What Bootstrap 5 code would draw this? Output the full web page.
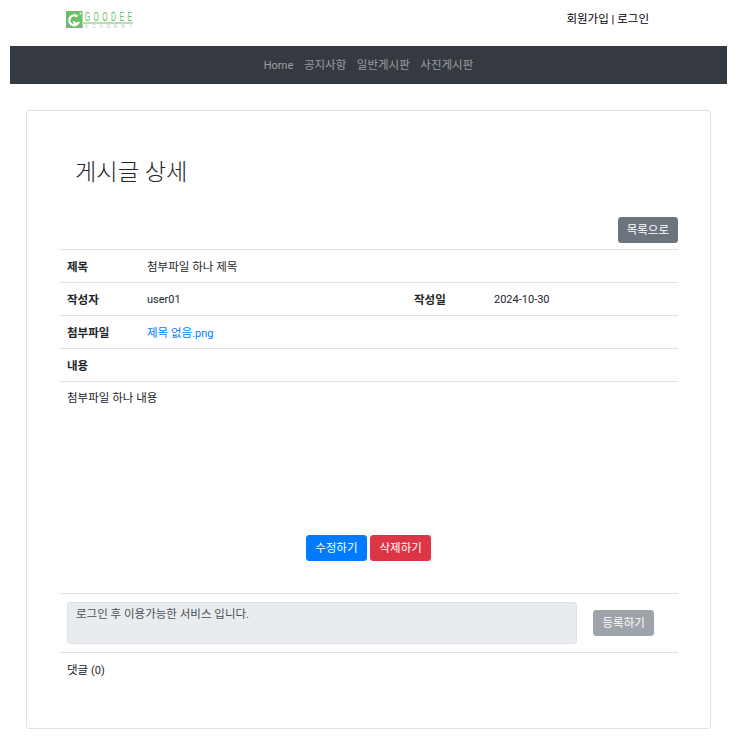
<!DOCTYPE html>
<html lang="ko">
<head>
    <meta charset="UTF-8">
    <title>게시글 상세</title>
    <link rel="stylesheet" href="https://cdn.jsdelivr.net/npm/bootstrap@5.3.0/dist/css/bootstrap.min.css">
    <style>
        body { font-family: Roboto, "Noto Sans CJK KR", sans-serif; font-size: 11.5px; line-height: 16px; color: #212529; }
        .lat { font-size: 11px; line-height: 1; }
        .page-wrap { padding: 0 15px 0 10px; }
        .top-head { height: 46px; padding: 11px 78px 0 56px; }
        .logo-main { font-family: "Liberation Sans", sans-serif; }
        .user-links { color: #000; }
        .user-links a { color: #000; text-decoration: none; }
        .main-nav { height: 38px; background: #343a40; }
        .main-nav a { color: rgba(255, 255, 255, .5); text-decoration: none; padding: 0 5.3px; }
        .detail-card { margin: 26px 16px 0; height: 619px; padding: 0 32px; border-color: #dee2e6; border-radius: 3px; }
        .detail-title { font-size: 23.2px; line-height: 32px; font-weight: 300; margin: 45px 0 29px 16px; }
        .btn-line { height: 32px; }
        .btn-small { font-size: 11.5px; line-height: 16px; padding: 4px 8px; border-radius: 3px; border-width: 1px; }
        .action-line .btn-small, .reply-form .btn-small { padding: 4px 8.5px; }
        .btn-secondary { --bs-btn-bg: #6c757d; --bs-btn-disabled-bg: #6c757d; --bs-btn-disabled-border-color: #6c757d; --bs-btn-disabled-opacity: .65; }
        .btn-primary { --bs-btn-bg: #007bff; --bs-btn-border-color: #007bff; }
        .btn-danger { --bs-btn-bg: #dc3545; --bs-btn-border-color: #dc3545; }
        .detail-table { table-layout: fixed; margin: 0; font-size: 11.5px; --bs-table-border-color: #dee2e6; border-top: 1px solid #dee2e6; }
        .detail-table td, .detail-table th { padding: 8.5px 8px 7.5px; line-height: 16px; font-weight: 400; }
        .detail-table th { font-weight: 700; }
        .detail-table a { color: #007bff; text-decoration: none; }
        .detail-table .content-cell { height: 153px; padding-top: 7.5px; vertical-align: top; border-bottom: 0; }
        .action-line { height: 58px; gap: 3px; }
        .reply-form { border-top: 1px solid #dee2e6; border-bottom: 1px solid #dee2e6; padding: 8px; gap: 16px; height: 60px; }
        .reply-box { width: 510px; height: 42px; font-size: 11.5px; line-height: 16px; padding: 3px 8px; border-radius: 3px; background: #e9ecef; resize: none; color: #495057; }
        .reply-box::placeholder { color: #495057; opacity: 1; }
        .reply-count { padding: 9px 8px; color: #212529; }
    </style>
</head>
<body>
<div class="page-wrap">
    <div class="top-head d-flex justify-content-between align-items-start">
        <svg width="67" height="18" viewBox="0 0 67 18">
            <rect x="0" y="0" width="16.5" height="17" fill="#6cc06a"/>
            <path d="M0 13 L3 17 L0 17 Z M16.5 14 L16.5 17 L11 17 Z" fill="#999"/>
            <path d="M11.5 5.5 A5 5 0 1 0 13 11 A3 3 0 0 1 7.5 10.5" fill="none" stroke="#fff" stroke-width="2.2"/>
            <circle cx="14.5" cy="2.5" r="1" fill="#fff"/>
            <g transform="scale(.55 1)">
                <text class="logo-main" x="34" y="10" font-size="12.5" fill="#6cc06a" textLength="86" lengthAdjust="spacing">GOODEE</text>
            </g>
            <rect x="17" y="11.5" width="50" height="1" fill="#6cc06a"/>
            <text class="logo-main" x="19" y="17" font-size="4.5" fill="#c4c4c4" textLength="47" lengthAdjust="spacing">ACADEMY</text>
        </svg>
        <div class="user-links"><a href="#">회원가입</a> | <a href="#">로그인</a></div>
    </div>

    <nav class="main-nav d-flex justify-content-center align-items-center">
        <a href="#" class="lat">Home</a>
        <a href="#">공지사항</a>
        <a href="#">일반게시판</a>
        <a href="#">사진게시판</a>
    </nav>

    <div class="card detail-card">
        <h2 class="detail-title">게시글 상세</h2>
        <div class="btn-line d-flex justify-content-end align-items-start">
            <a href="#" class="btn btn-secondary btn-small">목록으로</a>
        </div>
        <table class="table detail-table">
            <colgroup>
                <col style="width:80px">
                <col style="width:267px">
                <col style="width:80px">
                <col>
            </colgroup>
            <tr><th>제목</th><td colspan="3">첨부파일 하나 제목</td></tr>
            <tr><th>작성자</th><td class="lat">user01</td><th>작성일</th><td class="lat">2024-10-30</td></tr>
            <tr><th>첨부파일</th><td colspan="3"><a href="#">제목 없음<span class="lat">.png</span></a></td></tr>
            <tr><th colspan="4">내용</th></tr>
            <tr><td colspan="4" class="content-cell">첨부파일 하나 내용</td></tr>
        </table>
        <div class="action-line d-flex justify-content-center align-items-start">
            <a href="#" class="btn btn-primary btn-small">수정하기</a>
            <a href="#" class="btn btn-danger btn-small">삭제하기</a>
        </div>
        <div class="reply-form d-flex align-items-center">
            <textarea class="form-control reply-box" placeholder="로그인 후 이용가능한 서비스 입니다." disabled></textarea>
            <button type="button" class="btn btn-secondary btn-small" disabled>등록하기</button>
        </div>
        <div class="reply-count">댓글 <span class="lat">(0)</span></div>
    </div>
</div>
</body>
</html>
